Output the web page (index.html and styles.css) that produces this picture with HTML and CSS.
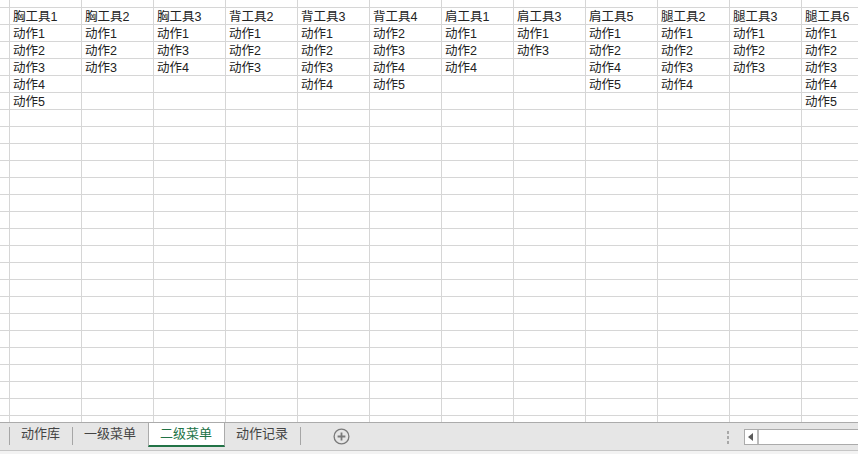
FILE: index.html
```html
<!DOCTYPE html>
<html lang="zh-CN">
  <head>
    <meta charset="UTF-8" />
    <meta name="viewport" content="width=device-width, initial-scale=1.0" />
    <title>二级菜单</title>
    <link rel="stylesheet" href="styles.css">
  </head>
  <body>
    <div class="sheet" id="sheet"></div>

    <div class="tabbar">
      <span class="sep first"></span>
      <div class="tab">动作库</div>
      <span class="sep"></span>
      <div class="tab">一级菜单</div>
      <div class="tab active">二级菜单</div>
      <div class="tab">动作记录</div>
      <span class="sep"></span>
      <div class="add-sheet">
        <svg width="17" height="17" viewBox="0 0 17 17">
          <circle cx="8.5" cy="8.5" r="7.4" fill="none" stroke="#7a7a7a" stroke-width="1.3" />
          <path d="M8.5 4.6v7.8M4.6 8.5h7.8" stroke="#7a7a7a" stroke-width="1.8" />
        </svg>
      </div>

      <div class="spacer"></div>

      <div class="grip">
        <i></i><i></i><i></i>
      </div>
      <div class="hscroll">
        <div class="scroll-btn">
          <svg width="6" height="8" viewBox="0 0 6 8">
            <path d="M5 0v8L0 4z" fill="#5a5a5a" />
          </svg>
        </div>
        <div class="scroll-track"></div>
      </div>
    </div>

    <script>
      const columns = [
        ["胸工具1", "动作1", "动作2", "动作3", "动作4", "动作5"],
        ["胸工具2", "动作1", "动作2", "动作3"],
        ["胸工具3", "动作1", "动作3", "动作4"],
        ["背工具2", "动作1", "动作2", "动作3"],
        ["背工具3", "动作1", "动作2", "动作3", "动作4"],
        ["背工具4", "动作2", "动作3", "动作4", "动作5"],
        ["肩工具1", "动作1", "动作2", "动作4"],
        ["肩工具3", "动作1", "动作3"],
        ["肩工具5", "动作1", "动作2", "动作4", "动作5"],
        ["腿工具2", "动作1", "动作2", "动作3", "动作4"],
        ["腿工具3", "动作1", "动作2", "动作3"],
        ["腿工具6", "动作1", "动作2", "动作3", "动作4", "动作5"],
      ];

      const sheet = document.getElementById("sheet");
      const rowCount = 26;

      for (let r = 0; r < rowCount; r++) {
        for (let c = 0; c <= columns.length; c++) {
          const cell = document.createElement("div");
          cell.className = "cell";
          if (r > 0 && c > 0) {
            cell.textContent = columns[c - 1][r - 1] || "";
          }
          sheet.appendChild(cell);
        }
      }
    </script>
  </body>
</html>
```

FILE: styles.css
```css
* {
  margin: 0;
  padding: 0;
  box-sizing: border-box;
}

body {
  width: 858px;
  height: 454px;
  overflow: hidden;
  background-color: #f3f3f3;
  font-family: "Liberation Sans", "Noto Sans CJK SC", sans-serif;
}

.sheet {
  height: 422px;
  overflow: hidden;
  background-color: white;
  display: grid;
  grid-template-columns: 10px repeat(12, 72px);
  grid-template-rows: 8px;
  grid-auto-rows: 17px;
}

.cell {
  border-right: 1px solid #d6d6d6;
  border-bottom: 1px solid #d6d6d6;
  padding: 2px 0 0 3px;
  font-size: 12.5px;
  line-height: 14px;
  color: #222;
  white-space: nowrap;
  overflow: hidden;
}

.tabbar {
  height: 29px;
  display: flex;
  align-items: flex-start;
  background-color: #e6e6e6;
  border-top: 1px solid #ababab;
  border-bottom: 1px solid #c6c6c6;
}

.sep {
  width: 1px;
  height: 18px;
  margin-top: 4px;
  background-color: #a6a6a6;
}

.sep.first {
  margin-left: 9px;
}

.tab {
  height: 22px;
  padding: 0 12px 0 11px;
  font-size: 13px;
  line-height: 22px;
  color: #444;
}

.tab.active {
  height: 24px;
  background-color: white;
  color: #217346;
  border-left: 1px solid #ababab;
  border-right: 1px solid #ababab;
  border-bottom: 2px solid #217346;
}

.add-sheet {
  margin: 5px 0 0 32px;
  height: 17px;
}

.add-sheet svg {
  display: block;
}

.spacer {
  flex: 1;
}

.grip {
  display: flex;
  flex-direction: column;
  gap: 2px;
  margin: 8px 15px 0 0;
}

.grip i {
  display: block;
  width: 2px;
  height: 3px;
  background-color: #a8a8a8;
}

.hscroll {
  display: flex;
  width: 114px;
  height: 16px;
  margin-top: 6px;
  border: 1px solid #ababab;
  border-right: none;
  background-color: white;
}

.scroll-btn {
  width: 14px;
  display: flex;
  align-items: center;
  justify-content: center;
  border-right: 2px solid #bcbcbc;
}

.scroll-btn svg {
  display: block;
}

.scroll-track {
  flex: 1;
}
```
